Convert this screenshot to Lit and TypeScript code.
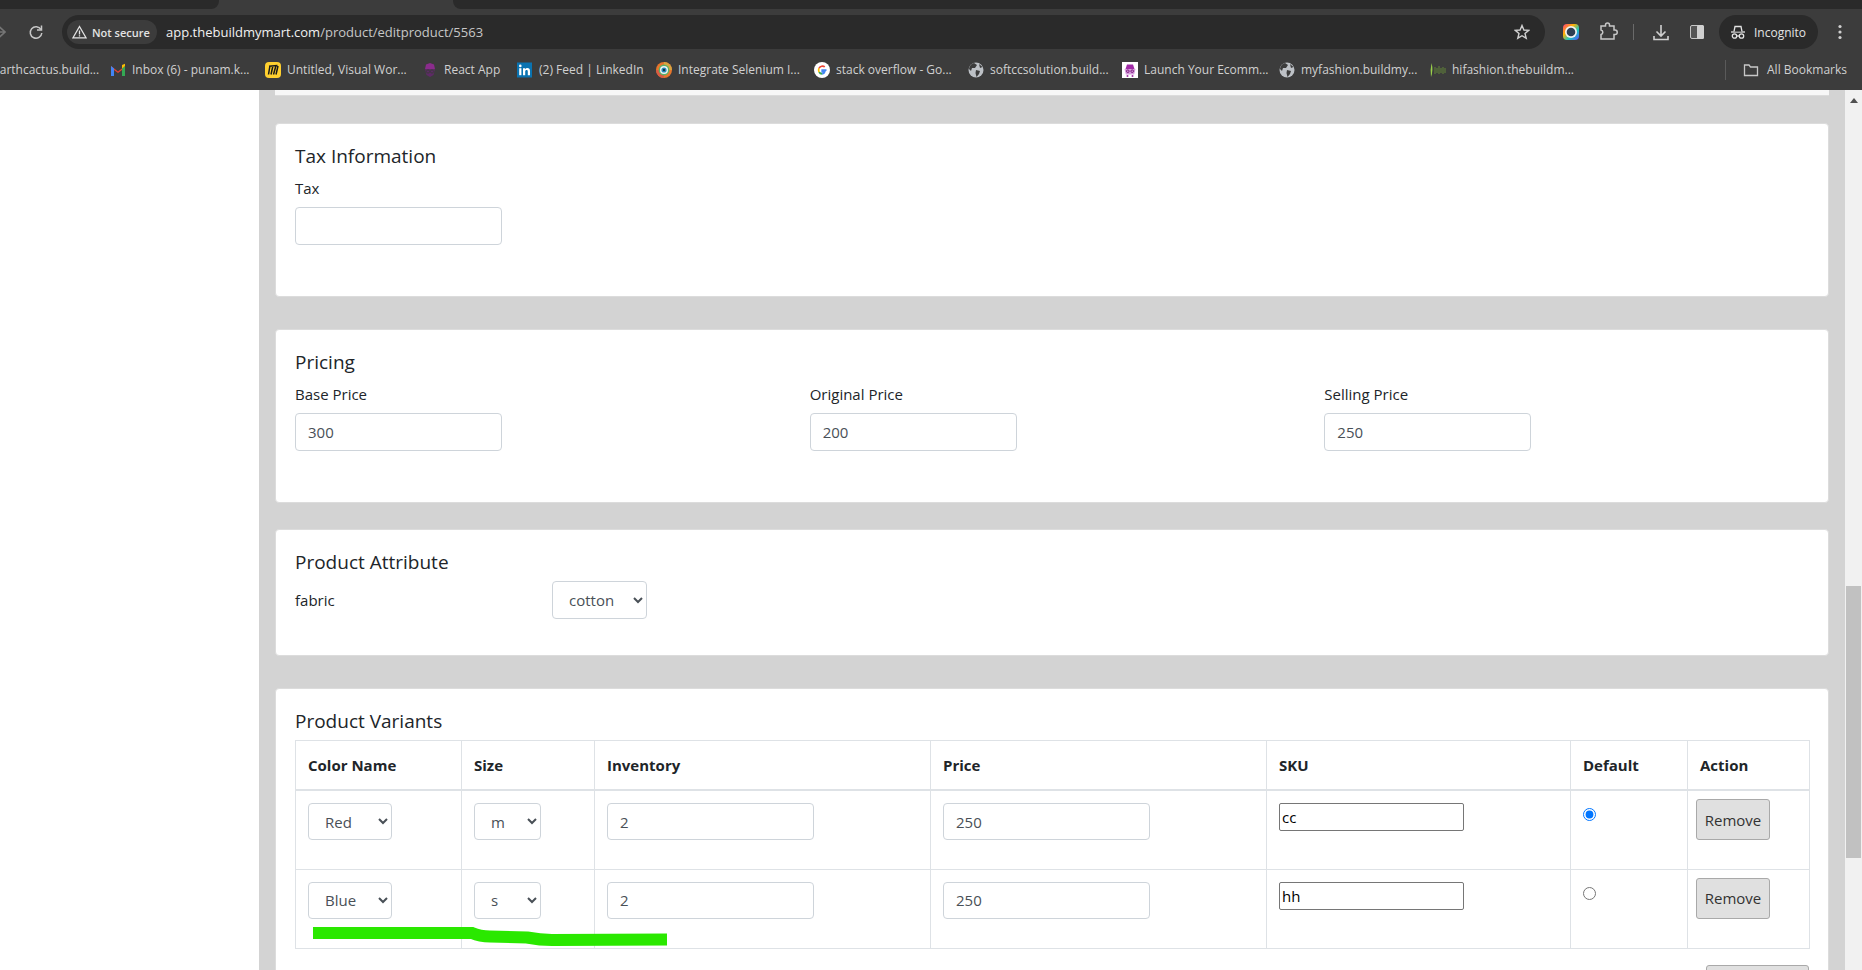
import { LitElement, html, css, svg } from 'lit';
import { customElement } from 'lit/decorators.js';

interface Bookmark {
  label: string;
  icon: string;
  width: number;
}

const BOOKMARKS: Bookmark[] = [
  { label: 'earthcactus.build...', icon: 'globe', width: 97 },
  { label: 'Inbox (6) - punam.k...', icon: 'gmail', width: 113 },
  { label: 'Untitled, Visual Wor...', icon: 'miro', width: 115 },
  { label: 'React App', icon: 'react', width: 53 },
  { label: '(2) Feed | LinkedIn', icon: 'linkedin', width: 97 },
  { label: 'Integrate Selenium I...', icon: 'selenium', width: 116 },
  { label: 'stack overflow - Go...', icon: 'google', width: 112 },
  { label: 'softccsolution.build...', icon: 'globe', width: 112 },
  { label: 'Launch Your Ecomm...', icon: 'launch', width: 115 },
  { label: 'myfashion.buildmy...', icon: 'globe', width: 109 },
  { label: 'hifashion.thebuildm...', icon: 'hifashion', width: 113 },
];

const favicons: Record<string, unknown> = {
  globe: svg`<circle cx="8" cy="8" r="7.5" fill="#bdc1c6"/>
    <path d="M6 1 L9 3 L7 6 L4 6 L3 9 L1 7 A7 7 0 0 1 6 1Z M8 8 L12 9 L11 12 L8.5 15 L7.5 11Z M11 2 L14.5 5 L12 6 Z" fill="#3c3c3c"/>`,
  gmail: svg`<path d="M1 14V4l7 5.5L15 4v10h-3V8L8 11 4 8v6z" fill="#ea4335"/>
    <path d="M1 14V4l3 2.5V14z" fill="#4285f4"/>
    <path d="M12 14V6.5L15 4v10z" fill="#34a853"/>
    <path d="M12 6.5V3l3-1.2V4z" fill="#fbbc04"/>`,
  miro: svg`<rect width="16" height="16" rx="4" fill="#ffd02f"/>
    <path d="M5 3.5 3.5 12.5 M8 3.5 6 12.5 M11 3.5 8.5 12.5 M13 4 11 12.5 M4 4.2 12.5 3.6" stroke="#1a1a1a" stroke-width="1.5" fill="none"/>`,
  react: svg`<path d="M3 7 4 2.5 8 1l4 1.5L13 7z" fill="#8a2c8c"/>
    <path d="M3 7h10l-1.5 6L8 15l-3.5-2z" fill="#5e2a66"/>
    <circle cx="6" cy="9.5" r="1.6" fill="none" stroke="#3c3c3c"/><circle cx="10" cy="9.5" r="1.6" fill="none" stroke="#3c3c3c"/>`,
  linkedin: svg`<rect width="15" height="15" y="0.5" fill="#0a73b1"/>
    <rect x="2.2" y="6.2" width="2.2" height="7" fill="#fff"/><circle cx="3.3" cy="3.9" r="1.3" fill="#fff"/>
    <path d="M6 6.2h2.1v1c.5-.8 1.2-1.2 2.2-1.2 1.9 0 2.7 1.2 2.7 3.1v4.1h-2.2V9.5c0-1-.3-1.6-1.2-1.6s-1.4.6-1.4 1.7v3.6H6z" fill="#fff"/>`,
  selenium: svg`<circle cx="8" cy="8" r="8" fill="#e8762c"/><path d="M8 0a8 8 0 0 1 8 8H8z" fill="#d9a441"/>
    <path d="M0 8a8 8 0 0 0 8 8V8z" fill="#d95b43"/>
    <circle cx="8" cy="8" r="5.4" fill="#58b368"/><circle cx="8" cy="8" r="4" fill="#f3f3f3"/>
    <circle cx="8" cy="8" r="2.6" fill="#2a8fbd"/><circle cx="8" cy="8" r="1.2" fill="#17323f"/>`,
  google: svg`<circle cx="8" cy="8" r="8" fill="#fff"/>
    <path d="M12.5 8.2H8.2v1.7h2.5c-.3 1.2-1.3 1.9-2.6 1.9" fill="none" stroke="#4285f4" stroke-width="1.7"/>
    <path d="M8.1 11.8c-1.3 0-2.4-.7-3-1.8" fill="none" stroke="#34a853" stroke-width="1.7"/>
    <path d="M5.1 10a4 4 0 0 1 0-3.9" fill="none" stroke="#fbbc04" stroke-width="1.7"/>
    <path d="M5.1 6.1a4 4 0 0 1 5.7-1.2" fill="none" stroke="#ea4335" stroke-width="1.7"/>`,
  launch: svg`<rect width="16" height="16" fill="#fff"/>
    <path d="M3.5 7 5 2.5h6L12.5 7z" fill="#a02aa6"/>
    <path d="M2.5 7h11l-1.4 5.5H3.9z" fill="#d79bdc"/>
    <circle cx="5.8" cy="9.2" r="1.3" fill="none" stroke="#7b1f80"/><circle cx="10.2" cy="9.2" r="1.3" fill="none" stroke="#7b1f80"/>
    <circle cx="5.5" cy="14" r="1" fill="#a02aa6"/><circle cx="10.5" cy="14" r="1" fill="#a02aa6"/>`,
  hifashion: svg`<path d="M1.5 1 Q3.5 8 1 15 Q0 8 1.5 1Z" fill="#9ad14b"/>
    <path d="M5 5v7 M7 6v5 M9 4v8 M11 6v5 M13 5v7 M15 6v5" stroke="#5d7a3a" stroke-width="1.2"/>`,
};

interface Variant {
  color: string;
  size: string;
  inventory: string;
  price: string;
  sku: string;
  isDefault: boolean;
}

const VARIANTS: Variant[] = [
  { color: 'Red', size: 'm', inventory: '2', price: '250', sku: 'cc', isDefault: true },
  { color: 'Blue', size: 's', inventory: '2', price: '250', sku: 'hh', isDefault: false },
];

const COLUMNS: [string, number][] = [
  ['Color Name', 166],
  ['Size', 133],
  ['Inventory', 336],
  ['Price', 336],
  ['SKU', 304],
  ['Default', 117],
  ['Action', 122],
];

const PRICES: [string, string][] = [
  ['Base Price', '300'],
  ['Original Price', '200'],
  ['Selling Price', '250'],
];

@customElement('browser-chrome')
export class BrowserChrome extends LitElement {
  static styles = css`
    :host {
      display: block;
      background: #3c3c3c;
      font-family: 'Open Sans', 'Liberation Sans', sans-serif;
      font-size: 12px;
      color: #d0d0d0;
      overflow: hidden;
    }
    .tabs {
      display: grid;
      grid-template-columns: 219px 234px 1fr;
      height: 9px;
    }
    .tab-dark {
      background: #2a2a2a;
    }
    .tab-left {
      border-bottom-right-radius: 8px;
    }
    .tab-right {
      border-bottom-left-radius: 8px;
    }
    .toolbar {
      display: flex;
      align-items: center;
      height: 34px;
      margin-top: 6px;
    }
    .forward {
      width: 12px;
      height: 16px;
      margin-left: -6px;
      flex: none;
    }
    .reload {
      width: 16px;
      height: 16px;
      margin-left: 22px;
      flex: none;
    }
    .omnibox {
      display: flex;
      align-items: center;
      width: 1483px;
      height: 34px;
      margin-left: 18px;
      flex: none;
      box-sizing: border-box;
      padding: 0 15px 0 5px;
      border-radius: 17px;
      background: #2a2a2a;
    }
    .chip {
      display: flex;
      align-items: center;
      gap: 5px;
      width: 90px;
      height: 24px;
      box-sizing: border-box;
      padding-left: 5px;
      border-radius: 12px;
      background: #3c3c3c;
      color: #e3e3e3;
      font-size: 11px;
      font-weight: 600;
      white-space: nowrap;
    }
    .url {
      margin-left: 9px;
      font-size: 13px;
      color: #c7c7c7;
      white-space: nowrap;
    }
    .host {
      color: #f1f1f1;
    }
    .star {
      width: 16px;
      height: 16px;
      margin-left: auto;
    }
    .actions {
      display: flex;
      align-items: center;
      gap: 13px;
      margin-left: 14px;
    }
    .action {
      width: 24px;
      height: 24px;
      flex: none;
    }
    .sep {
      width: 1px;
      height: 16px;
      background: #6a6a6a;
      margin-right: 2px;
    }
    .panel {
      margin-left: -1px;
    }
    .pill {
      display: flex;
      align-items: center;
      gap: 8px;
      width: 99px;
      height: 34px;
      box-sizing: border-box;
      padding-left: 11px;
      margin-left: -3px;
      border-radius: 17px;
      background: #2a2a2a;
      color: #e3e3e3;
      white-space: nowrap;
    }
    .kebab {
      margin-left: -3px;
    }
    .bookmarks {
      display: flex;
      align-items: center;
      gap: 20px;
      height: 41px;
      margin-left: -29px;
      padding-right: 15px;
    }
    .bookmark {
      display: flex;
      align-items: center;
      gap: 6px;
      flex: none;
    }
    .bookmark svg {
      width: 16px;
      height: 16px;
      flex: none;
    }
    .bookmark span {
      display: block;
      white-space: nowrap;
    }
    .all {
      display: flex;
      align-items: center;
      gap: 8px;
      margin-left: auto;
      white-space: nowrap;
    }
    .all-sep {
      width: 1px;
      height: 20px;
      background: #5a5a5a;
      margin-right: 9px;
    }
    .all svg {
      width: 16px;
      height: 16px;
    }
  `;

  render() {
    return html`
      <div class="tabs">
        <div class="tab-dark tab-left"></div>
        <div></div>
        <div class="tab-dark tab-right"></div>
      </div>
      <div class="toolbar">
        <svg class="forward" viewBox="0 0 12 16" fill="none" stroke="#757575" stroke-width="1.6">
          <path d="M0 8h10M5 2.5 11 8l-6 5.500" />
        </svg>
        <svg class="reload" viewBox="0 0 16 16" fill="none" stroke="#c7c7c7" stroke-width="1.5">
          <path d="M13 5.500A5.800 5.800 0 1 0 13.800 9" />
          <path d="M13.500 1.500V6H9" />
        </svg>
        <div class="omnibox">
          <div class="chip">
            <svg width="15" height="14" viewBox="0 0 15 14" fill="none" stroke="#e3e3e3" stroke-width="1.3">
              <path d="M7.500 1.500 14 12.800H1z" />
              <path d="M7.500 5.500v4M7.500 10.300v1.200" />
            </svg>
            Not secure
          </div>
          <div class="url"><span class="host">app.thebuildmymart.com</span>/product/editproduct/5563</div>
          <svg class="star" viewBox="0 0 16 16" fill="none" stroke="#d0d0d0" stroke-width="1.4">
            <path d="M8 1.500 9.900 6l4.800.4-3.700 3.100 1.200 4.700L8 11.700l-4.200 2.500L5 9.500 1.300 6.400 6.100 6z" />
          </svg>
        </div>
        <div class="actions">
          <svg class="action" viewBox="0 0 24 24">
            <defs>
              <linearGradient id="ext" x1="0" y1="0" x2="1" y2="1">
                <stop offset="0" stop-color="#ff3d7f" />
                <stop offset=".35" stop-color="#ffb300" />
                <stop offset=".65" stop-color="#18c7c0" />
                <stop offset="1" stop-color="#5a4bff" />
              </linearGradient>
            </defs>
            <rect x="4" y="4" width="16" height="16" rx="4" fill="url(#ext)" />
            <circle cx="12" cy="12" r="6" fill="#f2f2f2" />
            <circle cx="12" cy="12" r="4.300" fill="#2e3f52" />
          </svg>
          <svg class="action" viewBox="0 0 24 24" fill="none" stroke="#c7c7c7" stroke-width="1.500">
            <path d="M5 6h4.500V5a2 2 0 0 1 4 0v1H18v4h1a2.200 2.200 0 0 1 0 4.500h-1V19H5v-4.500a2.300 2.300 0 0 0 0-4.500z" />
          </svg>
          <div class="sep"></div>
          <svg class="action" viewBox="0 0 24 24" fill="none" stroke="#d0d0d0" stroke-width="1.600">
            <path d="M12 5v11M7.500 11.500 12 16l4.500-4.500M5 16v3.500h14V16" />
          </svg>
          <svg class="action panel" viewBox="0 0 24 24">
            <rect x="5.500" y="5.500" width="13" height="13" rx="1.500" fill="#555" stroke="#c7c7c7" />
            <rect x="12" y="5" width="7" height="14" rx="1.500" fill="#d0d0d0" />
          </svg>
          <div class="pill">
            <svg width="16" height="16" viewBox="0 0 16 16" fill="none" stroke="#e3e3e3" stroke-width="1.300">
              <path d="M1 8h14" />
              <path d="M4 7.500 5 2.500h6l1 5" fill="#2a2a2a" />
              <circle cx="4.500" cy="12" r="2.200" />
              <circle cx="11.500" cy="12" r="2.200" />
              <path d="M6.700 12h2.600" />
            </svg>
            Incognito
          </div>
          <svg class="action kebab" viewBox="0 0 24 24" fill="#d0d0d0">
            <circle cx="12" cy="6.500" r="1.600" />
            <circle cx="12" cy="12" r="1.600" />
            <circle cx="12" cy="17.500" r="1.600" />
          </svg>
        </div>
      </div>
      <div class="bookmarks">
        ${BOOKMARKS.map(
          (b) => html`<div class="bookmark">
            <svg viewBox="0 0 16 16">${favicons[b.icon]}</svg>
            <span style="width:${b.width}px">${b.label}</span>
          </div>`,
        )}
        <div class="all">
          <div class="all-sep"></div>
          <svg viewBox="0 0 16 16" fill="none" stroke="#c7c7c7" stroke-width="1.300">
            <path d="M1.500 3h4.500l1.500 2h7v8.500h-13z" />
          </svg>
          All Bookmarks
        </div>
      </div>
    `;
  }
}

@customElement('app-root')
export class AppRoot extends LitElement {
  static styles = css`
    :host {
      display: flex;
      flex-direction: column;
      position: relative;
      height: 970px;
      overflow: hidden;
      font-family: 'Open Sans', 'Liberation Sans', sans-serif;
      font-size: 15px;
      color: #212529;
    }
    .page {
      display: flex;
      flex: 1;
      min-height: 0;
      overflow: hidden;
      background: #fff;
    }
    .sidebar {
      width: 259px;
      flex: none;
    }
    .content {
      flex: 1;
      min-width: 0;
      padding: 0 16px;
      background: #d3d3d3;
    }
    .stub {
      height: 6px;
      background: #f7f7f7;
      border-bottom: 1px solid #dcdcdc;
      box-sizing: border-box;
      margin-bottom: 27px;
    }
    .card {
      box-sizing: border-box;
      border: 1px solid #dcdcdc;
      border-radius: 4px;
      background: #fff;
      padding: 20px 19px;
    }
    .wide-gap {
      margin-bottom: 32px;
    }
    .narrow-gap {
      margin-bottom: 26px;
    }
    .tall {
      height: 174px;
    }
    .attr {
      height: 127px;
    }
    h5 {
      margin: 0 0 8px;
      font-size: 19px;
      font-weight: 500;
      line-height: 24px;
    }
    label {
      display: block;
      line-height: 24px;
      margin-bottom: 7px;
    }
    .control {
      display: block;
      box-sizing: border-box;
      width: 207px;
      height: 38px;
      padding: 6px 12px;
      border: 1px solid #ced4da;
      border-radius: 4px;
      background: #fff;
      color: #495057;
      font: inherit;
    }
    .prices {
      display: grid;
      grid-template-columns: repeat(3, 1fr);
      column-gap: 30px;
    }
    .attr-row {
      display: grid;
      grid-template-columns: 257px 1fr;
      align-items: center;
      margin-top: -1px;
    }
    .attr-row label {
      margin-bottom: 0;
    }
    .attr-select {
      width: 95px;
    }
    .variants {
      padding-bottom: 0;
    }
    .variants h5 {
      margin-bottom: 7px;
    }
    table {
      width: 100%;
      border-collapse: collapse;
      table-layout: fixed;
    }
    th,
    td {
      box-sizing: border-box;
      border: 1px solid #dee2e6;
      padding: 12px;
      text-align: left;
      vertical-align: top;
    }
    th {
      border-bottom-width: 2px;
      font-weight: 700;
      line-height: 24px;
    }
    td {
      height: 79px;
    }
    .color-select {
      width: 84px;
      height: 37px;
    }
    .size-select {
      width: 67px;
      height: 37px;
    }
    .number {
      height: 37px;
    }
    .sku {
      display: block;
      box-sizing: border-box;
      width: 185px;
      height: 28px;
      padding: 1px 2px;
      border: 1px solid #767676;
      border-radius: 2px;
      font: inherit;
      color: #000;
    }
    input[type='radio'] {
      display: block;
      margin: 5px 0 0;
    }
    .action-cell {
      padding: 8px;
    }
    .btn {
      display: block;
      box-sizing: border-box;
      height: 41px;
      padding: 0;
      border: 1px solid #a9a9a9;
      border-radius: 3px;
      background: #e0e0e0;
      color: #333;
      font: inherit;
    }
    .remove {
      width: 74px;
    }
    .add {
      width: 103px;
      margin: 16px 0 0 auto;
    }
    .scrollbar {
      width: 17px;
      flex: none;
      background: #f1f1f1;
      display: flex;
      flex-direction: column;
      align-items: center;
    }
    .scroll-up {
      margin-top: 8px;
    }
    .thumb {
      width: 15px;
      height: 272px;
      margin-top: 483px;
      background: #c1c1c1;
    }
    .highlight {
      position: absolute;
      left: 0;
      top: 0;
      pointer-events: none;
    }
  `;

  render() {
    return html`
      <browser-chrome></browser-chrome>
      <div class="page">
        <div class="sidebar"></div>
        <div class="content">
          <div class="stub"></div>

          <section class="card tall wide-gap">
            <h5>Tax Information</h5>
            <label>Tax</label>
            <input class="control" type="text" />
          </section>

          <section class="card tall narrow-gap">
            <h5>Pricing</h5>
            <div class="prices">
              ${PRICES.map(
                ([name, value]) => html`<div>
                  <label>${name}</label>
                  <input class="control" type="text" .value=${value} />
                </div>`,
              )}
            </div>
          </section>

          <section class="card attr wide-gap">
            <h5>Product Attribute</h5>
            <div class="attr-row">
              <label>fabric</label>
              <select class="control attr-select"><option>cotton</option></select>
            </div>
          </section>

          <section class="card variants">
            <h5>Product Variants</h5>
            <table>
              <thead>
                <tr>
                  ${COLUMNS.map(([name, width]) => html`<th style="width:${width}px">${name}</th>`)}
                </tr>
              </thead>
              <tbody>
                ${VARIANTS.map(
                  (v) => html`<tr>
                    <td><select class="control color-select"><option>${v.color}</option></select></td>
                    <td><select class="control size-select"><option>${v.size}</option></select></td>
                    <td><input class="control number" type="text" .value=${v.inventory} /></td>
                    <td><input class="control number" type="text" .value=${v.price} /></td>
                    <td><input class="sku" type="text" .value=${v.sku} /></td>
                    <td><input type="radio" name="default" ?checked=${v.isDefault} /></td>
                    <td class="action-cell"><button class="btn remove" type="button">Remove</button></td>
                  </tr>`,
                )}
              </tbody>
            </table>
            <button class="btn add" type="button" aria-label="Add"></button>
          </section>
        </div>
        <div class="scrollbar">
          <svg class="scroll-up" width="8" height="5" viewBox="0 0 8 5"><path d="M4 0 8 5H0z" fill="#505050" /></svg>
          <div class="thumb"></div>
        </div>
      </div>
      <svg class="highlight" width="1862" height="970" viewBox="0 0 1862 970" fill="none">
        <path
          d="M313 933 L472 933 Q480 936.500 490 936.500 L527 937.500 Q540 940 552 940 L667 939.500"
          stroke="#2ae800"
          stroke-width="12"
        />
      </svg>
    `;
  }
}
